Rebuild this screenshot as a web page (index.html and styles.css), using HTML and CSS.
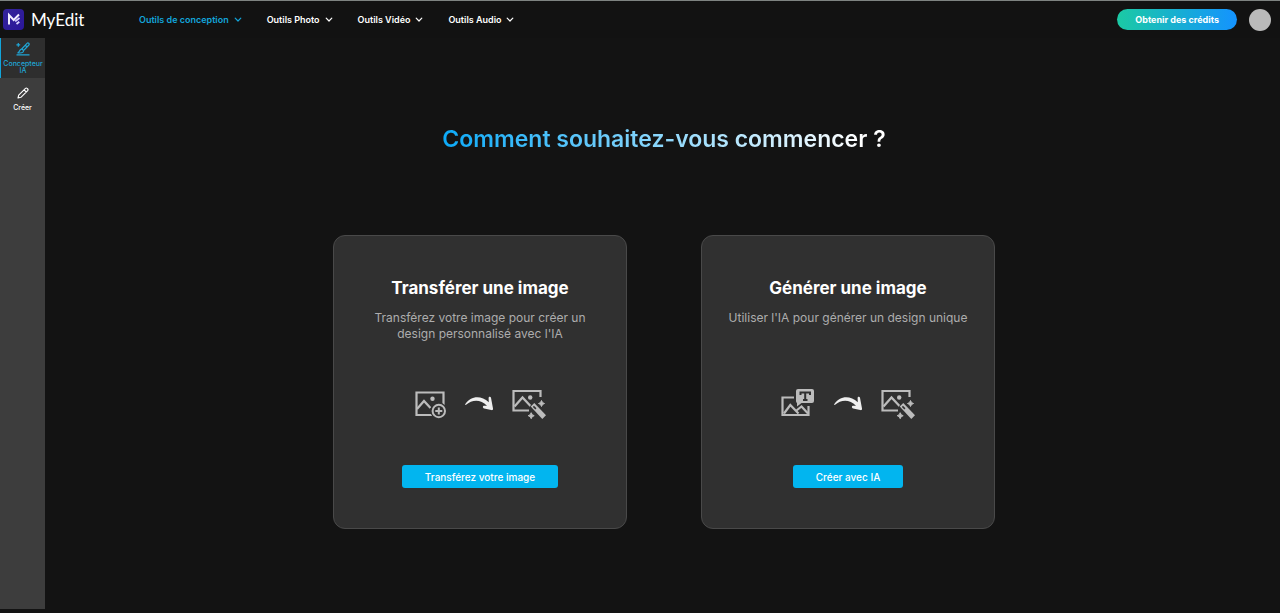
FILE: index.html
```html
<!DOCTYPE html>
<html lang="fr">
<head>
<meta charset="utf-8">
<title>MyEdit</title>
<meta name="viewport" content="width=device-width, initial-scale=1">
<link rel="stylesheet" href="styles.css">
</head>
<body>
<svg class="defs" aria-hidden="true">
  <symbol id="chevron" viewBox="0 0 8 6"><path d="M1.2 1.2 4 4 6.800 1.200" fill="none" stroke="currentColor" stroke-width="1.200" stroke-linecap="round" stroke-linejoin="round"/></symbol>
  <symbol id="arrow" viewBox="0 0 28 16"><path d="M0 8.500C6 -.5 16 -.8 23.800 6.300L23.600 2C23.500.4 25.700.1 26 1.700L28 12.600C28.100 13.900 27.300 14.400 26.200 14.100L19.200 12.400C17.200 11.700 17.700 9.600 19.400 9.700L22 9.800C15.500 3.300 7.500 3.300.7 9.100Z" fill="#eee"/></symbol>
  <symbol id="wand" viewBox="0 0 34 30">
    <g fill="none" stroke="#bcbcbc" stroke-width="2.200"><path d="M17 21.500H1.500V2H28.500V8"/><path d="M2.500 17.500 10.500 8.500 18.500 17"/></g>
    <circle cx="18.200" cy="8.500" r="2.200" fill="#bcbcbc"/>
    <path d="M21.500 14.300 31.800 27.300" stroke="#303030" stroke-width="8"/>
    <path d="M18.700 17.500 22.300 14 34 26.200 30.300 30Z" fill="#bcbcbc"/>
    <path d="M21.400 17.400 23.900 19.900" stroke="#303030" stroke-width="1.500"/>
    <path d="M29.500 11.500Q30 14 32.500 14.500 30 15 29.500 17.500 29 15 26.500 14.500 29 14 29.500 11.500ZM19.200 23.700Q19.700 26.200 22.200 26.700 19.700 27.200 19.200 29.700 18.700 27.200 16.200 26.700 18.700 26.200 19.200 23.700Z" fill="#bcbcbc" stroke="#bcbcbc"/>
  </symbol>
</svg>

<header class="topbar">
  <a class="brand" href="#">
    <svg class="brand-mark" viewBox="0 0 21 21" aria-hidden="true">
      <defs><linearGradient id="mark" x1="0" y1="0" x2="1" y2="1"><stop offset="0" stop-color="#34249b"/><stop offset="1" stop-color="#2a169a"/></linearGradient></defs>
      <rect width="21" height="21" rx="4" fill="url(#mark)"/>
      <path d="M6 15.500V6L10.700 11 16 5.500" fill="none" stroke="#f1eeff" stroke-width="2"/>
      <path d="M12.200 12.400 16.500 9M13.500 15 16.300 12.700" stroke="#d8d0ff" stroke-width="1.800"/>
    </svg>
    <span class="brand-name">MyEdit</span>
  </a>
  <nav class="menu" aria-label="Outils">
    <button class="menu-item active" type="button">Outils de conception<svg class="chevron"><use href="#chevron"/></svg></button>
    <button class="menu-item" type="button">Outils Photo<svg class="chevron"><use href="#chevron"/></svg></button>
    <button class="menu-item" type="button">Outils Vidéo<svg class="chevron"><use href="#chevron"/></svg></button>
    <button class="menu-item" type="button">Outils Audio<svg class="chevron"><use href="#chevron"/></svg></button>
  </nav>
  <button class="credits" type="button">Obtenir des crédits</button>
  <button class="avatar" type="button" aria-label="Compte"></button>
</header>

<div class="shell">
  <nav class="sidebar" aria-label="Espaces">
    <a class="side-item current" href="#">
      <svg class="side-icon" viewBox="0 0 14 14" fill="none" stroke="currentColor" stroke-width="1.200" aria-hidden="true"><path d="M.5 12.900H13.500M1.500 10.800C4 10.800 3 7.800 5 7.300S8.200 9 7 10.100 4 11.200 1.500 10.800Z"/><path d="M5.700 7 11 1.300Q11.800.5 12.700 1.300T12.900 3L7.500 8.600M9.300 3.300 11.200 5.100"/><path d="M2.300 1V4.800M.4 2.900H4.200"/></svg>
      Concepteur IA
    </a>
    <a class="side-item" href="#">
      <svg class="side-icon" viewBox="0 0 14 14" fill="none" stroke="currentColor" stroke-width="1.100" stroke-linejoin="round" aria-hidden="true"><path d="M2 12 2.700 9.200 9.500 2.400Q10.300 1.600 11.100 2.400L11.700 3Q12.500 3.800 11.700 4.600L4.900 11.300ZM8.100 3.800 10.300 6"/></svg>
      Créer
    </a>
  </nav>

  <main class="main">
    <h1 class="title">Comment souhaitez-vous commencer ?</h1>
    <div class="cards">
      <section class="card">
        <h2 class="card-title">Transférer une image</h2>
        <p class="card-text">Transférez votre image pour créer un design personnalisé avec l'IA</p>
        <div class="steps">
          <svg class="step-icon narrow" viewBox="2 0 31 30" aria-hidden="true">
            <g fill="none" stroke="#bcbcbc" stroke-width="2.200"><path d="M20 26H3.500V3.500H30.500V17"/><path d="M4 20 11 12 17.500 19"/></g>
            <circle cx="19.500" cy="9.800" r="2.200" fill="#bcbcbc"/>
            <circle cx="25.800" cy="22" r="8.500" fill="#303030"/>
            <circle cx="25.800" cy="22" r="6.200" fill="none" stroke="#bcbcbc" stroke-width="2"/>
            <path d="M25.800 18.500V25.500M22.300 22H29.300" stroke="#bcbcbc" stroke-width="2"/>
          </svg>
          <svg class="step-arrow" aria-hidden="true"><use href="#arrow"/></svg>
          <svg class="step-icon" aria-hidden="true"><use href="#wand"/></svg>
        </div>
        <button class="action" type="button">Transférez votre image</button>
      </section>
      <section class="card">
        <h2 class="card-title">Générer une image</h2>
        <p class="card-text">Utiliser l'IA pour générer un design unique</p>
        <div class="steps">
          <svg class="step-icon" viewBox="0 0 34 30" aria-hidden="true">
            <g fill="none" stroke="#bcbcbc" stroke-width="2.200"><path d="M13 8.500H1.500V26H27.500V17"/><path d="M3 24.500 9.300 16 17.500 24.500M15.500 21.500 20.500 17.500 27 24.500"/></g>
            <path d="M17 0H31Q33 0 33 2V12Q33 14 31 14H20.500L16 17.500V14Q15 13.500 15 12V2Q15 0 17 0Z" fill="#bcbcbc"/>
            <path d="M19.500 6V3.500H29V6M24.200 3.500V11M22 11H26.500" fill="none" stroke="#303030" stroke-width="2"/>
          </svg>
          <svg class="step-arrow" aria-hidden="true"><use href="#arrow"/></svg>
          <svg class="step-icon" aria-hidden="true"><use href="#wand"/></svg>
        </div>
        <button class="action" type="button">Créer avec IA</button>
      </section>
    </div>
  </main>
</div>
</body>
</html>
```

FILE: styles.css
```css
* {
  box-sizing: border-box;
}

body {
  margin: 0;
  min-height: 100vh;
  display: flex;
  flex-direction: column;
  background: #131313;
  color: #fff;
  font-family: "Inter", "Liberation Sans", sans-serif;
}

button {
  font: inherit;
  color: inherit;
  border: 0;
  cursor: pointer;
}

a {
  color: inherit;
  text-decoration: none;
}

.defs {
  position: absolute;
  width: 0;
  height: 0;
}

.topbar {
  display: flex;
  align-items: center;
  height: 38px;
  padding: 0 9px 0 3px;
  border-top: 1px solid #7e8381;
  background: #121212;
}

.brand {
  display: flex;
  align-items: center;
  gap: 7px;
  width: 136px;
}

.brand-mark {
  width: 21px;
  height: 21px;
}

.brand-name {
  font-family: "Lato", sans-serif;
  font-size: 17px;
  line-height: 20px;
}

.menu {
  display: flex;
  gap: 25px;
  flex: 1;
}

.menu-item {
  display: flex;
  align-items: center;
  gap: 5px;
  padding: 0;
  background: none;
  font-size: 9px;
  font-weight: 600;
  line-height: 16px;
}

.menu-item.active {
  color: #12a5da;
}

.chevron {
  width: 8px;
  height: 6px;
}

.credits {
  height: 21px;
  padding: 0 18px;
  border-radius: 11px;
  background: linear-gradient(90deg, #1bcaa4, #1493ff);
  font-size: 9px;
  font-weight: 700;
}

.avatar {
  width: 22px;
  height: 22px;
  margin-left: 12px;
  padding: 0;
  border-radius: 50%;
  background: #bababa;
}

.shell {
  flex: 1;
  display: flex;
}

.sidebar {
  width: 45px;
  margin-bottom: 4px;
  background: #3d3d3d;
}

.side-item {
  display: flex;
  flex-direction: column;
  align-items: center;
  gap: 4px;
  padding: 8px 0;
  font-size: 7px;
  font-weight: 500;
  line-height: 7px;
  text-align: center;
}

.side-item.current {
  padding: 4px 0;
  border-left: 1px solid #12a5da;
  background: #2e2e2e;
  color: #20a6d6;
}

.side-icon {
  width: 14px;
  height: 14px;
}

.main {
  flex: 1;
  display: flex;
  flex-direction: column;
  align-items: center;
  padding: 86px 0 84px 3px;
}

.title {
  margin: 0 0 80px;
  font-size: 23px;
  font-weight: 600;
  line-height: 31px;
  background: linear-gradient(90deg, #0caaf8, #fff 94%);
  background-clip: text;
  -webkit-background-clip: text;
  color: transparent;
}

.cards {
  display: flex;
  gap: 74px;
}

.card {
  display: flex;
  flex-direction: column;
  align-items: center;
  width: 294px;
  min-height: 294px;
  padding: 40px 20px;
  border: 1px solid #494949;
  border-radius: 12px;
  background: #303030;
  text-align: center;
}

.card-title {
  margin: 0 0 10px;
  font-size: 17px;
  font-weight: 700;
  line-height: 24px;
}

.card-text {
  margin: 0;
  min-height: 32px;
  color: #adadad;
  font-size: 12px;
  line-height: 16px;
}

.steps {
  display: flex;
  align-items: center;
  gap: 19px;
  margin: 47px 0 46px;
}

.step-icon {
  width: 34px;
  height: 30px;
}

.step-icon.narrow {
  width: 31px;
}

.step-arrow {
  width: 28px;
  height: 16px;
}

.action {
  height: 23px;
  margin-top: auto;
  padding: 0 23px;
  border-radius: 3px;
  background: #02b5ef;
  font-size: 10px;
  font-weight: 500;
}
```
